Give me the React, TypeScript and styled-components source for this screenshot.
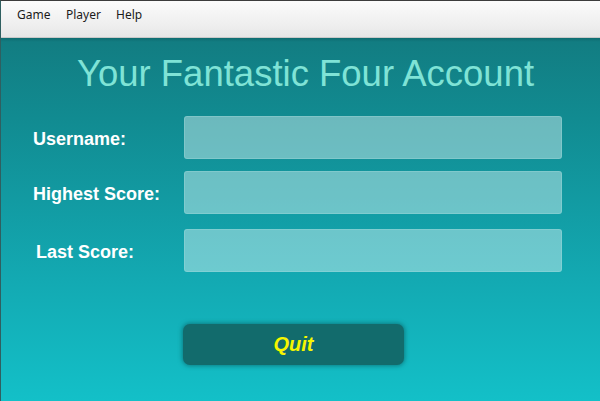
import React from "react";
import styled, { createGlobalStyle } from "styled-components";

const Global = createGlobalStyle`
  html, body { margin: 0; padding: 0; height: 100%; }
  body { font-family: "Liberation Sans", Arial, sans-serif; overflow: hidden; }
  #root { height: 100%; }
`;

const Frame = styled.div`
  width: 600px;
  height: 401px;
  display: flex;
  flex-direction: column;
  box-sizing: border-box;
  border-top: 1px solid #3c3c3c;
  border-left: 1px solid #2f5f60;
  background: #f0f0f0;
`;

const MenuBar = styled.div`
  height: 37px;
  flex: none;
  display: flex;
  align-items: flex-start;
  padding: 5px 0 0 16px;
  box-sizing: border-box;
  background: linear-gradient(#fbfbfb, #eeeeee 70%, #e6e6e6);
  border-bottom: 1px solid #c9c9c9;
`;

const MenuItem = styled.span<{ $w: number }>`
  width: ${(p) => p.$w}px;
  font-family: "Noto Sans", "Open Sans", sans-serif;
  font-size: 12px;
  line-height: 17px;
  color: #1b1b1b;
`;

const Body = styled.div`
  flex: 1;
  display: flex;
  flex-direction: column;
  background: linear-gradient(#0f6c70 0px, #127d82 4px, #118b91 80px, #13a9b2 240px, #13c0c8 100%);
`;

const Title = styled.h1`
  margin: 14px 0 0;
  text-align: center;
  padding-left: 10px;
  font-family: "Liberation Sans", Arial, sans-serif;
  font-weight: normal;
  font-size: 36.5px;
  line-height: 44px;
  color: #7fe3d6;
`;

const Form = styled.div`
  display: grid;
  grid-template-columns: 151px 378px;
  row-gap: 12px;
  padding-left: 32px;
  margin-top: 20px;
`;

const Label = styled.label<{ $shift?: number; $top?: number }>`
  display: flex;
  align-items: center;
  padding-left: ${(p) => p.$shift ?? 0}px;
  padding-top: 4px;
  margin-top: ${(p) => p.$top ?? 0}px;
  font-weight: bold;
  font-size: 18px;
  color: #ffffff;
`;

const Field = styled.div<{ $top?: number }>`
  height: 43px;
  margin-top: ${(p) => p.$top ?? 0}px;
  box-sizing: border-box;
  border-radius: 3px;
  background: rgba(238, 252, 252, 0.41);
  border: 1px solid rgba(170, 220, 220, 0.35);
`;

const Actions = styled.div`
  display: flex;
  padding-left: 182px;
  margin-top: 52px;
`;

const QuitButton = styled.button`
  width: 221px;
  height: 41px;
  border: none;
  border-radius: 7px;
  background: #126b6c;
  box-shadow: 0 0 4px 1px rgba(8, 80, 84, 0.55);
  color: #f6f600;
  font-family: "Liberation Sans", Arial, sans-serif;
  font-weight: bold;
  font-style: italic;
  font-size: 20px;
  cursor: pointer;
`;

export default function App() {
  return (
    <>
      <Global />
      <Frame>
        <MenuBar>
          <MenuItem $w={49}>Game</MenuItem>
          <MenuItem $w={50}>Player</MenuItem>
          <MenuItem $w={40}>Help</MenuItem>
        </MenuBar>
        <Body>
          <Title>Your Fantastic Four Account</Title>
          <Form>
            <Label>Username:</Label>
            <Field />
            <Label>Highest Score:</Label>
            <Field />
            <Label $shift={3} $top={3}>Last Score:</Label>
            <Field $top={3} />
          </Form>
          <Actions>
            <QuitButton>Quit</QuitButton>
          </Actions>
        </Body>
      </Frame>
    </>
  );
}
